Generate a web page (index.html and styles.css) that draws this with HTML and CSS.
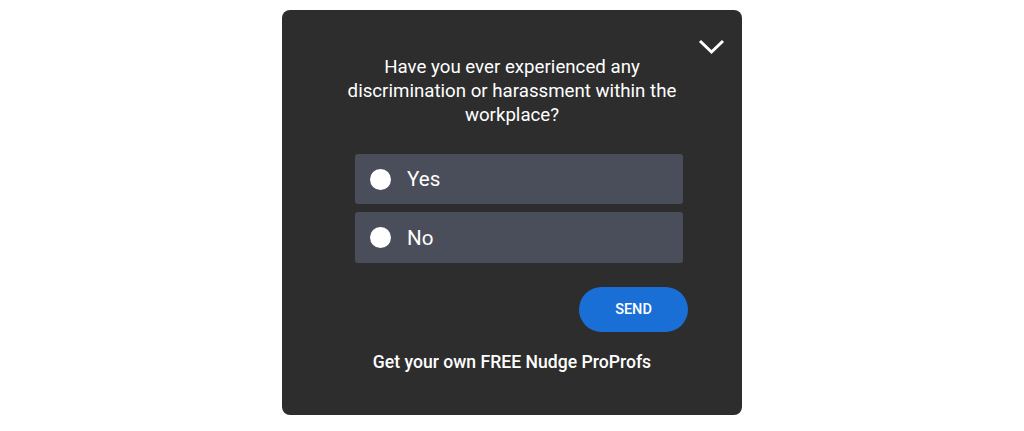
FILE: index.html
```html
<!DOCTYPE html>
<html>
<head>
<meta charset="utf-8">
<link rel="stylesheet" href="styles.css">
</head>
<body>
<div class="page">
  <div class="card">
    <button class="collapse" aria-label="collapse">
      <svg width="27" height="16" viewBox="0 0 27 16"><path d="M2 2 L13.5 13 L25 2" fill="none" stroke="#fff" stroke-width="3"/></svg>
    </button>
    <p class="question">Have you ever experienced any discrimination or harassment within the workplace?</p>
    <div class="options">
      <label class="option"><span class="radio"></span><span class="opt-label">Yes</span></label>
      <label class="option"><span class="radio"></span><span class="opt-label">No</span></label>
    </div>
    <div class="actions">
      <button class="send">SEND</button>
    </div>
    <p class="footer">Get your own FREE Nudge ProProfs</p>
  </div>
</div>
</body>
</html>
```
FILE: styles.css
```css
* { box-sizing: border-box; }
html, body { margin: 0; padding: 0; background: #fff; }
body { font-family: Roboto, "Liberation Sans", sans-serif; }
.page { display: flex; justify-content: center; padding-top: 10px; padding-left: 0; }
.card {
  position: relative;
  width: 460px;
  height: 405px;
  background: #2d2d2d;
  border-radius: 8px;
  color: #fff;
  display: flex;
  flex-direction: column;
}
.collapse {
  position: absolute;
  top: 29px;
  right: 17px;
  background: none;
  border: 0;
  padding: 0;
  width: 27px;
  height: 16px;
}
.collapse svg { display: block; }
.question {
  margin: 45px auto 0;
  width: 350px;
  text-align: center;
  font-size: 18.7px;
  line-height: 24px;
  font-weight: 400;
}
.options {
  margin: 27px 0 0 73px;
  width: 328px;
  display: flex;
  flex-direction: column;
  gap: 8px;
}
.option {
  display: flex;
  align-items: center;
  height: 51px;
  background: #4a4e5a;
  border-radius: 3px;
  padding-left: 15px;
}
.option:first-child { height: 50px; }
.radio {
  width: 21px;
  height: 21px;
  border-radius: 50%;
  background: #fff;
}
.opt-label {
  margin-left: 16px;
  font-size: 20.6px;
  line-height: 24px;
}
.actions {
  display: flex;
  justify-content: flex-end;
  margin: 24px 54px 0 0;
}
.send {
  width: 109px;
  height: 45px;
  border: 0;
  border-radius: 23px;
  background: #1a6fd6;
  color: #fff;
  font-family: Roboto, "Liberation Sans", sans-serif;
  font-size: 14.5px;
  font-weight: 500;
}
.footer {
  margin: 19px 0 0;
  text-align: center;
  font-size: 17.6px;
  line-height: 22px;
  font-weight: 500;
}
```
